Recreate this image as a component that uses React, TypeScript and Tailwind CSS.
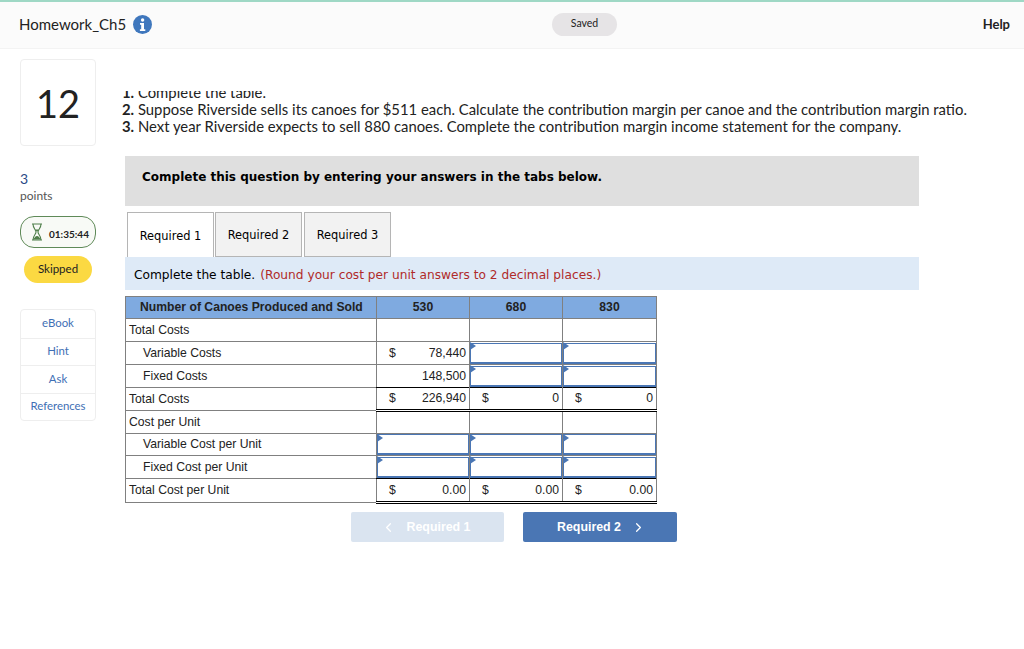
import { ChevronLeft, ChevronRight } from "lucide-react"

const proxima = "font-['Lato','Open_Sans',sans-serif]"
const arial = "font-['Liberation_Sans',Arial,sans-serif]"
const verdana = "font-['DejaVu_Sans',Verdana,sans-serif]"

const sideLinks = ["eBook", "Hint", "Ask", "References"]

function Hourglass() {
  return (
    <svg width="12" height="18" viewBox="0 0 12 18" fill="none" stroke="#4f7f4a" strokeWidth="1.1">
      <path d="M1 1h10M1 17h10M2 1c0 4.5 3 5.5 3 8s-3 3.500-3 8M10 1c0 4.500-3 5.500-3 8s3 3.500 3 8" />
      <path d="M2.500 16.500c.5-2 2-3.400 3.500-3.600 1.500.2 3 1.600 3.500 3.600z" fill="#4f7f4a" stroke="none" />
      <path d="M4 6.500h4L6 8.800z" fill="#4f7f4a" stroke="none" />
    </svg>
  )
}

function InfoIcon() {
  return (
    <svg width="19" height="19" viewBox="0 0 19 19">
      <circle cx="9.500" cy="9.500" r="9.500" fill="#3f77bd" />
      <circle cx="9.600" cy="5" r="1.700" fill="#fff" />
      <path d="M7 8h4v6.200h1.300V16H6.900v-1.800h1.300V9.800H7z" fill="#fff" />
    </svg>
  )
}

function InputCell() {
  return (
    <td className="relative p-0 border border-[#808080]">
      <div className="h-[21px] w-full border border-b-2 border-[#4a76b4]" />
      <span className="absolute left-0 top-0 w-0 h-0 border-y-[4px] border-y-transparent border-l-[6px] border-l-[#4a76b4]" />
    </td>
  )
}

function ValueCell({ value, dollar, total }: { value?: string; dollar?: boolean; total?: boolean }) {
  return (
    <td className={`px-[3px] border border-[#808080] ${total ? "border-t-black border-b-[3px] border-b-black border-double" : ""}`}>
      <div className="flex justify-between pl-[9px]">
        <span>{dollar ? "$" : ""}</span>
        <span>{value}</span>
      </div>
    </td>
  )
}

function LabelCell({ children, indent }: { children: string; indent?: boolean }) {
  return (
    <td className={`border border-[#808080] ${indent ? "pl-[17px]" : "pl-[3px]"}`}>{children}</td>
  )
}

function CostTable() {
  return (
    <table className={`${arial} mt-[6px] w-[531px] table-fixed border-collapse text-[12.2px] text-[#222]`}>
      <colgroup>
        <col className="w-[251px]" />
        <col className="w-[93px]" />
        <col className="w-[93px]" />
        <col className="w-[94px]" />
      </colgroup>
      <tbody>
        <tr className="h-[22px] bg-[#7faae0] font-bold">
          <td className="border border-[#808080] pl-[14px]">Number of Canoes Produced and Sold</td>
          <td className="border border-[#808080] text-center">530</td>
          <td className="border border-[#808080] text-center">680</td>
          <td className="border border-[#808080] text-center">830</td>
        </tr>
        <tr className="h-[23px]">
          <LabelCell>Total Costs</LabelCell>
          <ValueCell />
          <ValueCell />
          <ValueCell />
        </tr>
        <tr className="h-[23px]">
          <LabelCell indent>Variable Costs</LabelCell>
          <ValueCell dollar value="78,440" />
          <InputCell />
          <InputCell />
        </tr>
        <tr className="h-[23px]">
          <LabelCell indent>Fixed Costs</LabelCell>
          <ValueCell value="148,500" />
          <InputCell />
          <InputCell />
        </tr>
        <tr className="h-[23px]">
          <LabelCell>Total Costs</LabelCell>
          <ValueCell dollar value="226,940" total />
          <ValueCell dollar value="0" total />
          <ValueCell dollar value="0" total />
        </tr>
        <tr className="h-[23px]">
          <LabelCell>Cost per Unit</LabelCell>
          <ValueCell />
          <ValueCell />
          <ValueCell />
        </tr>
        <tr className="h-[22px]">
          <LabelCell indent>Variable Cost per Unit</LabelCell>
          <InputCell />
          <InputCell />
          <InputCell />
        </tr>
        <tr className="h-[23px]">
          <LabelCell indent>Fixed Cost per Unit</LabelCell>
          <InputCell />
          <InputCell />
          <InputCell />
        </tr>
        <tr className="h-[24px]">
          <LabelCell>Total Cost per Unit</LabelCell>
          <ValueCell dollar value="0.00" total />
          <ValueCell dollar value="0.00" total />
          <ValueCell dollar value="0.00" total />
        </tr>
      </tbody>
    </table>
  )
}

export default function App() {
  return (
    <div className={`${proxima} h-[649px] w-[1024px] overflow-hidden bg-white text-[#222]`}>
      <header className="flex h-[49px] items-center border-t-2 border-b border-t-[#9fd8c5] border-b-[#f3f3f3] bg-[#fbfbfb] pb-[2px] pl-[19px] pr-[14px]">
        <div className="flex w-[533px] items-center gap-[7px]">
          <span className="text-[15px]">Homework_Ch5</span>
          <InfoIcon />
        </div>
        <div className="flex h-[23px] w-[65px] items-center justify-center rounded-full bg-[#e6e4e6] text-[10.5px]">Saved</div>
        <div className="ml-auto pt-[2px] text-[13px] font-bold">Help</div>
      </header>

      <div className="flex">
        <aside className="ml-[20px] mt-[10px] flex w-[76px] flex-col">
          <div className="flex h-[87px] items-center justify-center rounded-[4px] border border-[#eeeeee] text-[38px] leading-none">12</div>
          <div className="mt-[24px] text-[14px] leading-[18px] text-[#2a4a86]">3</div>
          <div className="text-[12px] leading-[16px] text-[#555]">points</div>
          <div className="mt-[12px] flex h-[32px] items-center gap-[6px] rounded-[14px] border border-[#5f8a58] bg-[#f8faf6] pl-[10px] text-[10px] font-bold">
            <Hourglass />
            <span className="pt-[4px]">01:35:44</span>
          </div>
          <div className="mx-[4px] mt-[8px] flex h-[27px] items-center justify-center rounded-full bg-[#fbd942] pb-[1px] text-[11.5px]">Skipped</div>
          <div className="mt-[26px] flex flex-col rounded-[4px] border border-[#eeeeee] text-[#3f6fb5]">
            {sideLinks.map((link, i) => (
              <div key={link} className={`flex h-[27.5px] items-center justify-center pb-[2px] text-[11.4px] ${i > 0 ? "border-t border-[#eeeeee]" : ""}`}>
                {link}
              </div>
            ))}
          </div>
        </aside>

        <main className="ml-[26px] flex-1">
          <div className="mt-[42px] h-[45px] overflow-hidden text-[14.85px] leading-[17px]">
            <div className="-mt-[7px]">
              <div><b>1.</b> Complete the table.</div>
              <div><b>2.</b> Suppose Riverside sells its canoes for $511 each. Calculate the contribution margin per canoe and the contribution margin ratio.</div>
              <div><b>3.</b> Next year Riverside expects to sell 880 canoes. Complete the contribution margin income statement for the company.</div>
            </div>
          </div>

          <div className="ml-[3px] w-[794px]">
            <div className={`${verdana} mt-[20px] h-[50px] bg-[#dfdfdf] pl-[17px] pt-[13px] text-[12px] font-bold leading-[17px] text-black`}>
              Complete this question by entering your answers in the tabs below.
            </div>

            <div className={`${verdana} mt-[6px] ml-[2px] flex h-[45px] text-[11.4px] text-black`}>
              <div className="flex w-[87px] items-center justify-center border border-b-0 border-[#b5b5b5] bg-white pt-[3px]">Required 1</div>
              <div className="ml-[1px] flex w-[87px] items-center justify-center border border-[#b5b5b5] bg-[#f2f2f2] pt-[3px]">Required 2</div>
              <div className="ml-[2px] flex w-[87px] items-center justify-center border border-[#b5b5b5] bg-[#f2f2f2] pt-[3px]">Required 3</div>
            </div>

            <div className={`${verdana} flex h-[33px] items-center bg-[#deeaf7] pl-[9px] pt-[3px] text-[12.2px] text-black`}>
              <span>Complete the table.</span>
              <span className="ml-[5px] text-[#b02a2a]">(Round your cost per unit answers to 2 decimal places.)</span>
            </div>

            <CostTable />

            <div className={`${arial} mt-[8px] ml-[226px] flex gap-[19px] text-[12.4px] font-bold text-white`}>
              <div className="flex h-[30px] w-[153px] items-center justify-center gap-[10px] rounded-[2px] bg-[#dae4f0] pr-[3px]">
                <ChevronLeft size={15} />
                <span>Required 1</span>
              </div>
              <div className="flex h-[30px] w-[154px] items-center justify-center gap-[10px] rounded-[2px] bg-[#4a76b4] pl-[3px]">
                <span>Required 2</span>
                <ChevronRight size={15} />
              </div>
            </div>
          </div>
        </main>
      </div>
    </div>
  )
}
